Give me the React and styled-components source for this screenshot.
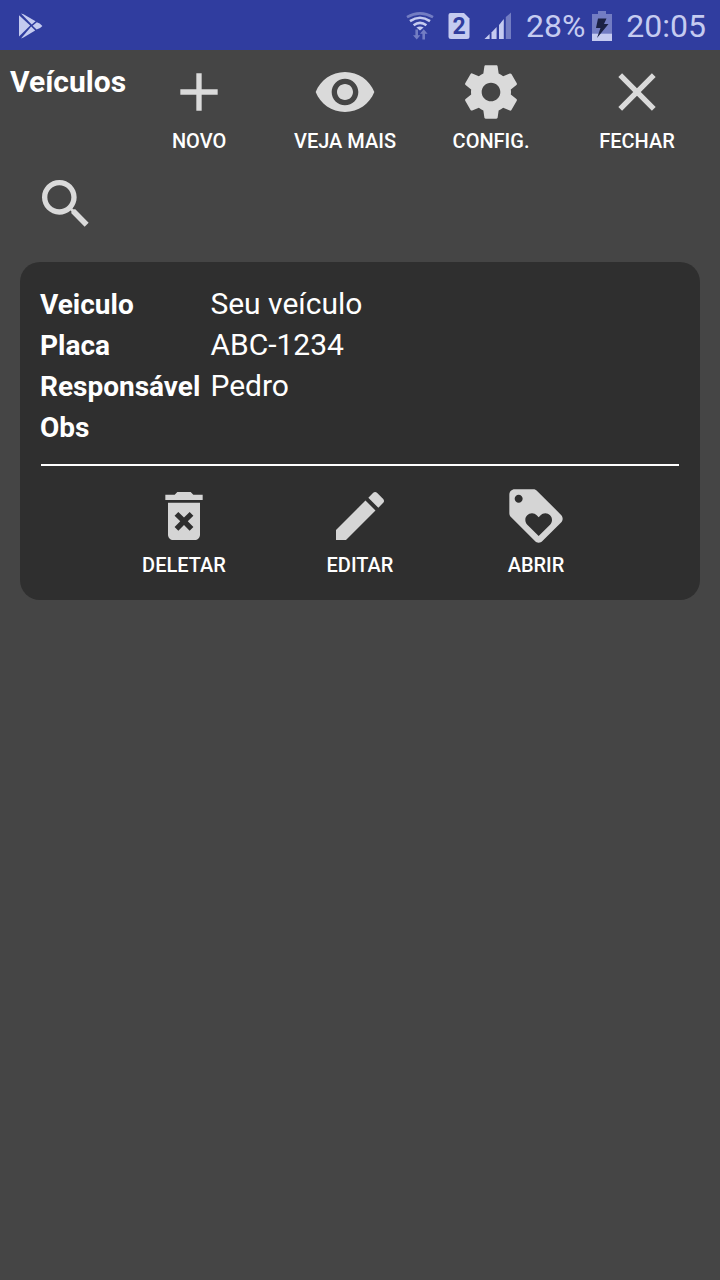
import React from "react";
import styled, { createGlobalStyle } from "styled-components";

const GlobalStyle = createGlobalStyle`
  *, *::before, *::after { box-sizing: border-box; }
  body {
    margin: 0;
    background: #454545;
    color: #ffffff;
    font-family: Roboto, "Liberation Sans", sans-serif;
  }
`;

const Page = styled.div`
  display: flex;
  flex-direction: column;
  min-height: 100vh;
  background: #454545;
`;

const StatusBar = styled.div`
  display: flex;
  align-items: center;
  justify-content: space-between;
  height: 50px;
  padding: 2px 14px 0 18px;
  background: #303d9f;
  color: #c5cbf0;
`;

const StatusGroup = styled.div`
  display: flex;
  align-items: center;
  gap: ${(p) => p.$gap || 14}px;
`;

const StatusText = styled.span`
  font-size: 32px;
  line-height: 38px;
  font-weight: 400;
`;

const StatusIcon = styled.svg`
  display: block;
  flex: none;
  fill: #c5cbf0;
`;

const Toolbar = styled.header`
  display: flex;
  align-items: flex-start;
  padding: 10px 10px 0;
`;

const Title = styled.h1`
  margin: 4px 0 0;
  font-size: 30px;
  line-height: 36px;
  font-weight: 700;
`;

const Actions = styled.nav`
  display: flex;
  flex: 1;
  padding: ${(p) => p.$inset || "0"};
`;

const ActionButton = styled.button`
  display: flex;
  flex: 1 1 0;
  flex-direction: column;
  align-items: center;
  gap: 5px;
  min-width: 0;
  margin: 0;
  padding: 0;
  border: 0;
  background: none;
  color: #ffffff;
  font-family: inherit;
  font-size: 20px;
  line-height: 24px;
  font-weight: 500;
  white-space: nowrap;
  cursor: pointer;
`;

const Glyph = styled.svg`
  display: block;
  width: 64px;
  height: 64px;
  fill: rgba(255, 255, 255, 0.8);
`;

const SearchRow = styled.div`
  display: flex;
  padding: 19px 34px 26px;
`;

const SearchButton = styled.button`
  margin: 0;
  padding: 0;
  border: 0;
  background: none;
  cursor: pointer;
`;

const Card = styled.article`
  margin: 0 20px;
  padding: 21px 20px 23px;
  border-radius: 20px;
  background: #2f2f2f;
`;

const Details = styled.dl`
  display: grid;
  grid-template-columns: max-content 1fr;
  grid-auto-rows: 41px;
  align-items: baseline;
  column-gap: 10px;
  margin: 0;
  line-height: 41px;
`;

const Term = styled.dt`
  font-size: 28px;
  font-weight: 700;
`;

const Value = styled.dd`
  margin: 0;
  font-size: 30px;
`;

const Divider = styled.hr`
  height: 2px;
  margin: 17px 1px 18px;
  border: 0;
  background: #ffffff;
`;

const PATHS = {
  add: "M19 13h-6v6h-2v-6H5v-2h6V5h2v6h6v2z",
  eye: "M12 4.5C7 4.5 2.73 7.61 1 12c1.73 4.39 6 7.5 11 7.5s9.27-3.11 11-7.5c-1.73-4.39-6-7.5-11-7.5zM12 17c-2.76 0-5-2.24-5-5s2.24-5 5-5 5 2.24 5 5-2.24 5-5 5zm0-8c-1.66 0-3 1.34-3 3s1.34 3 3 3 3-1.34 3-3-1.34-3-3-3z",
  gear: "M19.43 12.98c.04-.32.07-.64.07-.98s-.03-.66-.07-.98l2.11-1.65c.19-.15.24-.42.12-.64l-2-3.46c-.12-.22-.39-.3-.61-.22l-2.49 1c-.52-.4-1.08-.73-1.69-.98l-.38-2.65C14.46 2.18 14.25 2 14 2h-4c-.25 0-.46.18-.49.42l-.38 2.65c-.61.25-1.17.59-1.69.98l-2.49-1c-.23-.09-.49 0-.61.22l-2 3.46c-.13.22-.07.49.12.64l2.11 1.65c-.04.32-.07.65-.07.98s.03.66.07.98l-2.11 1.65c-.19.15-.24.42-.12.64l2 3.46c.12.22.39.3.61.22l2.49-1c.52.4 1.08.73 1.69.98l.38 2.65c.03.24.24.42.49.42h4c.25 0 .46-.18.49-.42l.38-2.65c.61-.25 1.17-.59 1.69-.98l2.49 1c.23.09.49 0 .61-.22l2-3.46c.12-.22.07-.49-.12-.64l-2.11-1.65zM12 15.5c-1.93 0-3.5-1.57-3.5-3.5s1.57-3.5 3.5-3.5 3.5 1.57 3.5 3.5-1.57 3.5-3.5 3.5z",
  close: "M19 6.41L17.59 5 12 10.59 6.41 5 5 6.41 10.59 12 5 17.59 6.41 19 12 13.41 17.59 19 19 17.59 13.41 12z",
  search: "M15.5 14h-.79l-.28-.27C15.41 12.59 16 11.11 16 9.5 16 5.91 13.09 3 9.5 3S3 5.91 3 9.5 5.91 16 9.5 16c1.61 0 3.09-.59 4.23-1.57l.27.28v.79l5 4.99L20.49 19l-4.99-5zm-6 0C7.01 14 5 11.99 5 9.5S7.01 5 9.5 5 14 7.01 14 9.5 11.99 14 9.5 14z",
  trash: "M6 19c0 1.1.9 2 2 2h8c1.1 0 2-.9 2-2V7H6v12zm2.46-7.12l1.41-1.41L12 12.59l2.12-2.12 1.41 1.41L13.41 14l2.12 2.12-1.41 1.41L12 15.41l-2.12 2.12-1.41-1.41L10.59 14l-2.13-2.12zM15.5 4l-1-1h-5l-1 1H5v2h14V4z",
  pencil: "M3 17.25V21h3.75L17.81 9.94l-3.75-3.75L3 17.25zM20.71 7.04c.39-.39.39-1.02 0-1.41l-2.34-2.34c-.39-.39-1.02-.39-1.41 0l-1.83 1.83 3.75 3.75 1.83-1.83z",
  tag: "M21.41 11.58l-9-9C12.05 2.22 11.55 2 11 2H4c-1.1 0-2 .9-2 2v7c0 .55.22 1.05.59 1.42l9 9c.36.36.86.58 1.41.58.55 0 1.05-.22 1.41-.59l7-7c.37-.36.59-.86.59-1.41 0-.55-.23-1.06-.59-1.42zM5.5 7C4.67 7 4 6.33 4 5.5S4.67 4 5.5 4 7 4.67 7 5.5 6.33 7 5.5 7zm11.77 8.27L13 19.54l-4.27-4.27C8.28 14.81 8 14.19 8 13.5c0-1.38 1.12-2.5 2.5-2.5.69 0 1.32.28 1.77.74l.73.72.73-.73c.45-.45 1.08-.73 1.77-.73 1.38 0 2.5 1.12 2.5 2.5 0 .69-.28 1.32-.73 1.77z",
};

function Icon({ name }) {
  return (
    <Glyph viewBox="0 0 24 24" aria-hidden="true">
      <path d={PATHS[name]} />
    </Glyph>
  );
}

function Action({ icon, label }) {
  return (
    <ActionButton type="button">
      <Icon name={icon} />
      {label}
    </ActionButton>
  );
}

function PlayIcon() {
  return (
    <StatusIcon width="26" height="28" viewBox="0 0 26 28" aria-hidden="true">
      <path d="M1 3.2 L12.2 13.4 L1 24.6 Z" />
      <path d="M3 1.6 L5.5 2.2 L17.6 9.2 L13.7 12.6 Z" />
      <path d="M3 26.4 L5.5 25.6 L17.2 18.4 L13.2 14.6 Z" />
      <path d="M14.6 13.7 L18.8 10.2 Q21.8 10.8 24.4 14 Q21.8 17 18.6 17.5 Z" />
    </StatusIcon>
  );
}

function WifiIcon() {
  return (
    <StatusIcon width="28" height="28" viewBox="0 0 28 28" aria-hidden="true">
      <g fill="none" stroke="#c5cbf0" strokeWidth="2.6">
        <path d="M1 5.2 Q14 -2.4 27 5.2" opacity="0.45" />
        <path d="M4 9.2 Q14 2.4 24 9.2" />
        <path d="M7.6 13.2 Q14 8.6 20.4 13.2" />
      </g>
      <path d="M10.4 15.6 Q14 13.2 17.6 15.6 L14 18.6 Z" />
      <g opacity="0.45">
        <path d="M9.4 17.6 h2.6 v5.6 h2.4 l-3.7 4.4 l-3.7 -4.4 h2.4 z" />
        <path d="M16.4 27.4 h2.6 v-5.6 h2.6 l-3.9 -4.6 l-3.7 4.6 h2.4 z" />
      </g>
    </StatusIcon>
  );
}

function SimIcon() {
  return (
    <StatusIcon width="22" height="28" viewBox="0 0 22 28" aria-hidden="true">
      <path d="M2.5 1 H16 L21.5 6.5 V24.5 Q21.5 27 19 27 H3 Q0.5 27 0.5 24.5 V3 Q0.5 1 2.5 1 Z" />
      <text
        x="11"
        y="22"
        textAnchor="middle"
        fontFamily="Roboto, sans-serif"
        fontWeight="700"
        fontSize="23"
        fill="#303d9f"
      >
        2
      </text>
    </StatusIcon>
  );
}

function SignalIcon() {
  return (
    <StatusIcon width="28" height="28" viewBox="0 0 28 28" aria-hidden="true">
      <path d="M0.5 27 L5.6 22 V27 Z" />
      <path d="M7.5 20.5 L12.6 15 V27 H7.5 Z" />
      <path d="M15 13 L19.8 7 V27 H15 Z" />
      <path d="M21.8 5 L27 0.6 V27 H21.8 Z" opacity="0.45" />
    </StatusIcon>
  );
}

function BatteryIcon() {
  return (
    <StatusIcon width="20" height="30" viewBox="0 0 20 30" aria-hidden="true">
      <path d="M6 0 H14 V3 H20 V22.5 H0 V3 H6 Z" opacity="0.45" />
      <path d="M0 22.5 H20 V30 H0 Z" />
      <path d="M6 7.5 H14.5 L12 13 H16.5 L5 27 L8.5 17 H4 Z" fill="#1b2144" />
    </StatusIcon>
  );
}

const DETAILS = [
  ["Veiculo", "Seu veículo"],
  ["Placa", "ABC-1234"],
  ["Responsável", "Pedro"],
  ["Obs", "\u00a0"],
];

export default function App() {
  return (
    <Page>
      <GlobalStyle />
      <StatusBar>
        <PlayIcon />
        <StatusGroup>
          <WifiIcon />
          <SimIcon />
          <SignalIcon />
          <StatusGroup $gap={7}>
            <StatusText>28%</StatusText>
            <BatteryIcon />
          </StatusGroup>
          <StatusText>20:05</StatusText>
        </StatusGroup>
      </StatusBar>

      <Toolbar>
        <Title>Veículos</Title>
        <Actions>
          <Action icon="add" label="NOVO" />
          <Action icon="eye" label="VEJA MAIS" />
          <Action icon="gear" label="CONFIG." />
          <Action icon="close" label="FECHAR" />
        </Actions>
      </Toolbar>

      <main>
        <SearchRow>
          <SearchButton type="button" aria-label="Buscar">
            <Icon name="search" />
          </SearchButton>
        </SearchRow>

        <Card>
          <Details>
            {DETAILS.map(([term, value]) => (
              <React.Fragment key={term}>
                <Term>{term}</Term>
                <Value>{value}</Value>
              </React.Fragment>
            ))}
          </Details>
          <Divider />
          <Actions $inset="0 56px">
            <Action icon="trash" label="DELETAR" />
            <Action icon="pencil" label="EDITAR" />
            <Action icon="tag" label="ABRIR" />
          </Actions>
        </Card>
      </main>
    </Page>
  );
}
